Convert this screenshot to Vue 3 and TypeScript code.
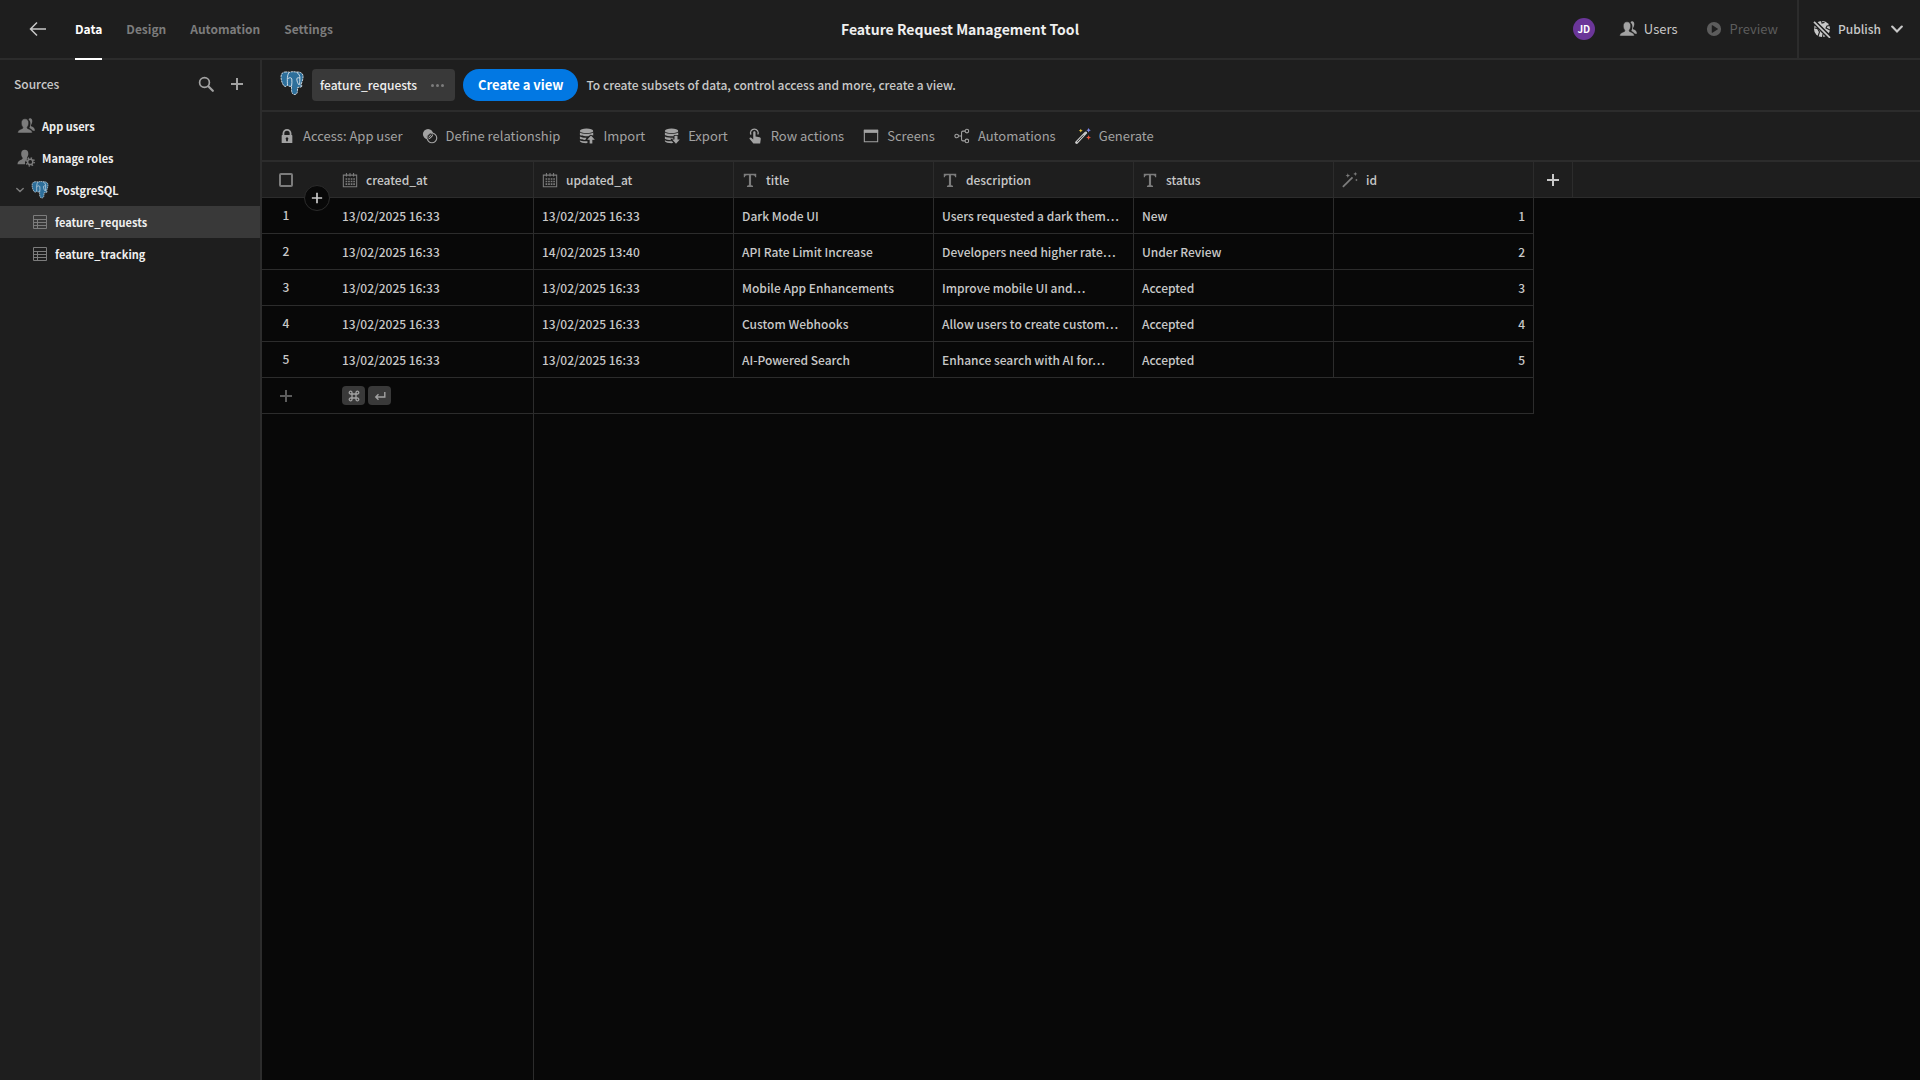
<script setup lang="ts">
import { ref } from 'vue'

interface Column {
  key: keyof Row
  icon: 'calendar' | 'text' | 'wand'
}
interface Row {
  created_at: string
  updated_at: string
  title: string
  description: string
  status: string
  id: number
}

const tabs = ['Data', 'Design', 'Automation', 'Settings']
const activeTab = ref('Data')
const activeTable = ref('feature_requests')
const tables = ['feature_requests', 'feature_tracking']

const actions = [
  { icon: 'lock', label: 'Access: App user' },
  { icon: 'relationship', label: 'Define relationship' },
  { icon: 'import', label: 'Import' },
  { icon: 'export', label: 'Export' },
  { icon: 'touch', label: 'Row actions' },
  { icon: 'screen', label: 'Screens' },
  { icon: 'flow', label: 'Automations' },
  { icon: 'magic', label: 'Generate' },
]

const columns: Column[] = [
  { key: 'created_at', icon: 'calendar' },
  { key: 'updated_at', icon: 'calendar' },
  { key: 'title', icon: 'text' },
  { key: 'description', icon: 'text' },
  { key: 'status', icon: 'text' },
  { key: 'id', icon: 'wand' },
]

const stamp = '13/02/2025 16:33'
const rows: Row[] = [
  { created_at: stamp, updated_at: stamp, title: 'Dark Mode UI', description: 'Users requested a dark them…', status: 'New', id: 1 },
  { created_at: stamp, updated_at: '14/02/2025 13:40', title: 'API Rate Limit Increase', description: 'Developers need higher rate…', status: 'Under Review', id: 2 },
  { created_at: stamp, updated_at: stamp, title: 'Mobile App Enhancements', description: 'Improve mobile UI and…', status: 'Accepted', id: 3 },
  { created_at: stamp, updated_at: stamp, title: 'Custom Webhooks', description: 'Allow users to create custom…', status: 'Accepted', id: 4 },
  { created_at: stamp, updated_at: stamp, title: 'AI-Powered Search', description: 'Enhance search with AI for…', status: 'Accepted', id: 5 },
]
</script>

<template>
  <svg class="defs" aria-hidden="true">
    <symbol id="elephant" viewBox="0 0 24 25">
      <path d="M6 1C2.500.8.8 3 1 6.500c.3 3.500 1.500 7 3.200 8.500 1.200 1 2.500.3 3.300-.8.8 1 2.500 1.300 4 1.100v4c.2 2 .8 4 2.600 4.200 2.200.2 3.200-1.200 3.300-3.200l.3-4c1.600.2 3.500-.2 4.500-1.200.3-.6-.4-.9-1.500-.8C22 11 23.600 7 22.900 4 22 1.500 19 .6 16.500 1.100 13 .5 11 .6 9.500 1.300 8.500.9 7.300.9 6 1z" fill="#2d6f9b" stroke="#dfe8ee" stroke-width=".9" stroke-dasharray="2.200 .7" />
      <path d="M9.500 1.300C7 3 7.200 9 7.500 14.200M8 7.500c1.500-1.200 3.500-1 3.800.5.200 2.500.2 5-.3 7.300M16.500 1.100c2.500 1.700 3.700 4 3.400 6.500-.3 2.300 0 3.700-.2 6.200M20 7.200c-1.500-.8-3.200-.6-3.200.8.200 2.700 1 4.500 2.400 6.100" fill="none" stroke="#dfe8ee" stroke-width=".9" />
    </symbol>
    <symbol id="back" viewBox="0 0 18 18"><path d="M17 9H2M8 2.500 1.500 9 8 15.500" fill="none" stroke="currentColor" stroke-width="1.500" /></symbol>
    <symbol id="plus" viewBox="0 0 14 14"><path d="M7 1v12M1 7h12" fill="none" stroke="currentColor" stroke-width="2" /></symbol>
    <symbol id="search" viewBox="0 0 16 16"><path d="m10.500 10.500 4.300 4.300" stroke="currentColor" stroke-width="2.200" stroke-linecap="round" /><circle cx="6.500" cy="6.500" r="4.900" fill="none" stroke="currentColor" stroke-width="1.700" /></symbol>
    <symbol id="chevron" viewBox="0 0 10 10"><path d="m1 3 4 4 4-4" fill="none" stroke="currentColor" stroke-width="1.800" stroke-linecap="round" /></symbol>
    <symbol id="users" viewBox="0 0 18 18">
      <path d="M11.500 2.200C12 1.300 13 .9 14 1.500c2 1.100 1.400 4.500.2 6.200-.5.800-.3 1.600.6 1.900 1.800.7 3 1.800 3.100 4.100l-2 .1c-.8-1.400-2.200-2.300-3.600-2.900.9-1.900 2.300-5.800-.8-8.700z" fill="currentColor" />
      <path d="M8 1.800c2.500 0 3.700 1.700 3.700 4.200 0 1.700-.6 3-1.300 3.900-.5.700-.3 1.500.6 1.800 2.500.8 4.300 1.800 4.300 4.300H.7c0-2.500 1.800-3.500 4.300-4.300.9-.3 1.100-1.100.6-1.800C4.900 9 4.300 7.700 4.300 6 4.300 3.500 5.500 1.800 8 1.800z" fill="currentColor" stroke="var(--gray-100)" stroke-width=".5" />
    </symbol>
    <symbol id="roles" viewBox="0 0 18 18">
      <path d="M7.800.8c2.300 0 3.500 1.500 3.500 3.900 0 1.600-.6 2.800-1.200 3.700-.4.600-.3 1.200.3 1.500L8 12.500v2.700H.5c0-2.700 1.800-4 4.300-4.800.9-.3 1.100-1 .6-1.800-.7-1-1.200-2.200-1.200-3.900C4.200 2.300 5.400.8 7.800.8z" fill="currentColor" />
      <circle cx="13.200" cy="12.900" r="2.600" fill="none" stroke="currentColor" stroke-width="1.500" />
      <circle cx="13.200" cy="12.900" r="4" fill="none" stroke="currentColor" stroke-width="1.500" stroke-dasharray="1.500 1.640" />
    </symbol>
    <symbol id="table" viewBox="0 0 16 16"><path d="M1.500 1.500h13v13h-13zM1.500 5.500h13M1.500 8.500h13M1.500 11.500h13M5.500 5.500v9" fill="none" stroke="currentColor" /></symbol>
    <symbol id="play" viewBox="0 0 18 18"><path fill-rule="evenodd" d="M9 1a8 8 0 1 0 0 16A8 8 0 0 0 9 1zM6.500 5.200c0-.5.400-.6.800-.4l6 3.800c.3.200.3.600 0 .8l-6 3.800c-.4.200-.8.100-.8-.4z" fill="currentColor" /></symbol>
    <symbol id="globe" viewBox="0 0 18 18">
      <circle cx="9" cy="9" r="8" fill="currentColor" />
      <path d="M8.500.5 9 3l2.500-.6M17 5.500l-3 .5-1 2 4 2M1.500 8l3 .5 2 3.500-1.500 4.500M9.500 17l.5-3" fill="none" stroke="var(--gray-100)" stroke-width="1.100" />
      <path d="m0 .8 17.500 17.500" stroke="var(--gray-100)" stroke-width="4.600" />
      <path d="m1 1.800 16 16" stroke="currentColor" stroke-width="1.700" />
    </symbol>
    <symbol id="lock" viewBox="0 0 18 18"><path fill-rule="evenodd" d="M14.500 8H14V6A5 5 0 0 0 4 6v2h-.5a.5.500 0 0 0-.5.500v8c0 .3.200.5.500.5h11c.3 0 .5-.2.500-.5v-8a.5.500 0 0 0-.5-.5zM6 6a3 3 0 0 1 6 0v2H6zm4 7.200V15H8v-1.800a1.500 1.500 0 1 1 2 0z" fill="currentColor" /></symbol>
    <symbol id="relationship" viewBox="0 0 18 18">
      <circle cx="6.800" cy="6.800" r="5.800" fill="currentColor" />
      <circle cx="11.200" cy="11.200" r="5.400" fill="none" stroke="currentColor" stroke-width="1.300" />
      <path d="M12 6.800A5.500 5.500 0 0 0 6.500 12M6 9.500 9.500 6M7 12l4.500-4.500M9 13l3.500-3.500" stroke="var(--gray-100)" stroke-width="1.100" fill="none" />
    </symbol>
    <symbol id="import" viewBox="0 0 18 18">
      <ellipse cx="8.500" cy="3.300" rx="7.500" ry="2.600" fill="currentColor" />
      <path d="M1 5.200c2 2 13 2 15 0v3.300l-3-.9-2.500 1.600C6.500 9.500 2.500 9.200 1 8zM1 9.500c1.800 1.200 4.500 1.500 7.500 1.400L7 13.500c-2.500 0-5-.3-6-1.300zM1 13.700c1 .9 3 1.200 6 1.300h2.500v2C6 17.200 1.500 16.700 1 15z" fill="currentColor" />
      <path d="m13.500 8.500 4.300 4.700h-2.800v4.300h-3v-4.300H9.200z" fill="currentColor" />
    </symbol>
    <symbol id="export" viewBox="0 0 18 18">
      <ellipse cx="8.500" cy="3.300" rx="7.500" ry="2.600" fill="currentColor" />
      <path d="M1 5.200c2 2 13 2 15 0v2.600h-5v1.600C6.500 9.500 2.500 9.200 1 8zM1 9.500c1.800 1.200 6 1.400 9.500 1.400v1.200H7l1.300 1.600C5 13.700 2 13.300 1 12.200zM1 13.700c2 1.300 5 1.200 8 1.300l1.500 2C6 17.200 1.500 16.700 1 15z" fill="currentColor" />
      <path d="m13.500 17.800 4.300-4.800h-2.600V8.800h-3.400V13H9.200z" fill="currentColor" />
    </symbol>
    <symbol id="touch" viewBox="0 0 18 18">
      <path d="M4.500 7.500a4.300 4.300 0 1 1 7.600-.1" fill="none" stroke="currentColor" stroke-width="1.400" />
      <path d="M7 5.200c0-1.900 2.600-1.900 2.600 0v4.300l4.500.8c1.100.3 1.500 1 1.400 2l-.7 5.200H7.200L3 12.300c-.8-1.200.7-2.300 1.800-1.300L7 12.800z" fill="currentColor" />
    </symbol>
    <symbol id="screen" viewBox="0 0 18 18"><path d="M1.500 2.500h15v13h-15z" fill="none" stroke="currentColor" stroke-width="1.200" /><path d="M1 2h16v3.500H1z" fill="currentColor" /></symbol>
    <symbol id="flow" viewBox="0 0 18 18">
      <g fill="none" stroke="currentColor" stroke-width="1.200"><circle cx="3" cy="9" r="2" /><circle cx="14.500" cy="3.500" r="2" /><circle cx="14.500" cy="14.500" r="2" /><path d="M5 9h3.500M12.500 3.500H10A1.500 1.500 0 0 0 8.500 5v8a1.500 1.500 0 0 0 1.500 1.500h2.500" /></g>
    </symbol>
    <symbol id="magic" viewBox="0 0 18 18">
      <path d="M1.800 16.200 12 5.500" stroke="#c8c8c8" stroke-width="3.200" stroke-linecap="round" /><path d="m2.500 15.500 7-7.300" stroke="#1e1e1e" stroke-width="1" />
      <path d="m6.500.8.700 1.500 1.500.7-1.500.7-.7 1.500-.7-1.500L4.300 3l1.500-.7z" fill="#e8c33c" />
      <path d="m15.300 0 .8 1.700 1.700.8-1.700.8-.8 1.700-.8-1.700-1.700-.8 1.700-.8z" fill="#7d86e8" />
      <path d="m15.300 8 .8 1.900 1.900.8-1.900.8-.8 1.900-.8-1.900-1.900-.8 1.900-.8z" fill="#e8543c" />
    </symbol>
    <symbol id="calendar" viewBox="0 0 18 18">
      <path d="M1.500 3.500h15v13h-15zM5 1v4M9 1v4M13 1v4" fill="none" stroke="currentColor" stroke-width="1.200" />
      <path d="M4 7.800h10.500M4 10.700h10.500M4 13.600h10.500" stroke="currentColor" stroke-width="1.800" stroke-dasharray="1.900 1" />
    </symbol>
    <symbol id="text" viewBox="0 0 18 18"><path d="M2 2h14v4h-1.200c-.2-1.600-.9-2.400-2.400-2.400H10.200v10.600c0 .8.500 1.100 2.200 1.200V17H5.600v-1.600c1.700-.1 2.200-.4 2.200-1.200V3.600H5.600C4.100 3.600 3.400 4.400 3.200 6H2z" fill="currentColor" /></symbol>
    <symbol id="wand" viewBox="0 0 18 18">
      <path d="M1 16.800 11.800 6" stroke="currentColor" stroke-width="2" />
      <path d="m6.500 1.500.8 1.800 1.800.7-1.800.8-.8 1.700-.7-1.700L4 4l1.800-.7zM15 0l.7 1.500 1.600.7-1.600.7L15 4.500l-.7-1.600-1.600-.7 1.600-.7zM16.200 7.500l.5 1 1 .5-1 .5-.5 1-.5-1-1-.5 1-.5z" fill="currentColor" />
    </symbol>
    <symbol id="command" viewBox="0 0 12 12"><path d="M4 4h4v4H4zM4 4H2.700A1.400 1.400 0 1 1 4 2.700zM8 4V2.700A1.400 1.400 0 1 1 9.300 4zM8 8h1.300A1.400 1.400 0 1 1 8 9.300zM4 8v1.300A1.400 1.400 0 1 1 2.700 8z" fill="none" stroke="currentColor" stroke-width="1.300" /></symbol>
    <symbol id="return" viewBox="0 0 12 12"><path d="M10.800 2v5H2M4.500 4.300 1.800 7l2.700 2.700" fill="none" stroke="currentColor" stroke-width="1.400" /></symbol>
  </svg>

  <div class="app">
    <header class="topbar">
      <div class="topbar-side">
        <button class="icon-button back" aria-label="Back"><svg class="i18"><use href="#back" /></svg></button>
        <nav class="tabs">
          <a v-for="tab in tabs" :key="tab" href="#" :class="['tab', { active: tab === activeTab }]" @click.prevent="activeTab = tab">{{ tab }}</a>
        </nav>
      </div>
      <h1>Feature Request Management Tool</h1>
      <div class="topbar-side end">
        <span class="avatar">JD</span>
        <button class="top-action"><svg class="i18"><use href="#users" /></svg>Users</button>
        <button class="top-action preview" disabled><svg class="i16"><use href="#play" /></svg>Preview</button>
        <button class="top-action publish"><svg class="i18"><use href="#globe" /></svg>Publish<svg class="i12"><use href="#chevron" /></svg></button>
      </div>
    </header>

    <div class="body">
      <aside class="sidebar">
        <div class="sidebar-head">
          <h2>Sources</h2>
          <button class="icon-button" aria-label="Search"><svg class="i16"><use href="#search" /></svg></button>
          <button class="icon-button" aria-label="Add source"><svg class="i14"><use href="#plus" /></svg></button>
        </div>
        <nav class="sources">
          <a href="#" class="source"><svg class="i18"><use href="#users" /></svg>App users</a>
          <a href="#" class="source"><svg class="i18"><use href="#roles" /></svg>Manage roles</a>
          <a href="#" class="source datasource"><svg class="i8"><use href="#chevron" /></svg><svg class="i18"><use href="#elephant" /></svg>PostgreSQL</a>
          <a v-for="name in tables" :key="name" href="#" :class="['source', 'child', { selected: name === activeTable }]" @click.prevent="activeTable = name">
            <svg class="i16"><use href="#table" /></svg>{{ name }}
          </a>
        </nav>
      </aside>

      <main class="content">
        <div class="views">
          <svg class="logo"><use href="#elephant" /></svg>
          <button class="view-pill">feature_requests<span class="dots"><i /><i /><i /></span></button>
          <button class="cta">Create a view</button>
          <p>To create subsets of data, control access and more, create a view.</p>
        </div>

        <div class="toolbar">
          <button v-for="action in actions" :key="action.label" class="tool">
            <svg class="i16"><use :href="'#' + action.icon" /></svg>{{ action.label }}
          </button>
        </div>

        <div class="grid">
          <table>
            <colgroup>
              <col class="gutter-col" />
              <col v-for="column in columns" :key="column.key" class="data-col" />
              <col class="add-col" />
              <col />
            </colgroup>
            <thead>
              <tr>
                <th class="gutter">
                  <span class="gutter-box"><input type="checkbox" aria-label="Select all rows" /></span>
                  <button class="insert" aria-label="Insert row"><svg class="i12"><use href="#plus" /></svg></button>
                </th>
                <th v-for="column in columns" :key="column.key" class="lined">
                  <span class="head-label"><svg class="i16"><use :href="'#' + column.icon" /></svg>{{ column.key }}</span>
                </th>
                <th class="lined add"><button class="icon-button" aria-label="Add column"><svg class="i14"><use href="#plus" /></svg></button></th>
                <th />
              </tr>
            </thead>
            <tbody>
              <tr v-for="row in rows" :key="row.id">
                <td class="gutter"><span class="gutter-box number">{{ row.id }}</span></td>
                <td v-for="column in columns" :key="column.key" :class="['lined', { numeric: column.key === 'id' }]">{{ row[column.key] }}</td>
                <td class="blank" colspan="2" />
              </tr>
              <tr>
                <td class="gutter"><span class="gutter-box"><button class="icon-button new-row" aria-label="Add row"><svg class="i14"><use href="#plus" /></svg></button></span></td>
                <td class="lined">
                  <span class="keys"><kbd aria-label="Command"><svg class="i12"><use href="#command" /></svg></kbd><kbd aria-label="Return"><svg class="i12"><use href="#return" /></svg></kbd></span>
                </td>
                <td class="lined" colspan="5" />
                <td class="blank" colspan="2" />
              </tr>
            </tbody>
          </table>
          <div class="pinned-edge" />
        </div>
      </main>
    </div>
  </div>
</template>

<style>
body {
  background: #080808;
}
</style>

<style scoped>
.defs {
  position: absolute;
  width: 0;
  height: 0;
}
.app {
  --gray-50: #080808;
  --gray-100: #1e1e1e;
  --gray-200: #2c2c2c;
  --gray-300: #393939;
  --gray-500: #5c5c5c;
  --gray-600: #7c7c7c;
  --gray-700: #a2a2a2;
  --gray-800: #c8c8c8;
  --gray-900: #efefef;
  display: flex;
  flex-direction: column;
  min-height: 100vh;
  background: var(--gray-50);
  color: var(--gray-800);
  font: 500 12px/20px 'Noto Sans CJK SC', 'Open Sans', sans-serif;
}
* {
  box-sizing: border-box;
}
button {
  padding: 0;
  border: 0;
  background: none;
  color: inherit;
  font: inherit;
}
a {
  color: inherit;
  text-decoration: none;
}
h1,
h2,
p {
  margin: 0;
}
svg {
  flex: none;
  display: block;
}
.i8 { width: 8px; height: 8px; }
.i12 { width: 12px; height: 12px; }
.i14 { width: 14px; height: 14px; }
.i16 { width: 16px; height: 16px; }
.i18 { width: 18px; height: 18px; }
.icon-button {
  display: flex;
  align-items: center;
  justify-content: center;
}

.topbar {
  display: flex;
  height: 60px;
  background: var(--gray-100);
  border-bottom: 2px solid var(--gray-200);
}
.topbar-side {
  flex: 1;
  display: flex;
  align-items: center;
}
.topbar-side.end {
  justify-content: flex-end;
}
.back {
  margin: 0 28px 0 29px;
}
.tabs {
  display: flex;
  align-self: stretch;
  gap: 24px;
  margin-bottom: -2px;
}
.tab {
  display: flex;
  align-items: center;
  color: var(--gray-600);
  font-weight: 700;
  border-bottom: 2px solid transparent;
}
.tab.active {
  color: #fff;
  border-color: #fff;
}
h1 {
  align-self: center;
  color: var(--gray-900);
  font-size: 14px;
  font-weight: 700;
}
.avatar {
  width: 22px;
  height: 22px;
  margin-right: 24px;
  border-radius: 50%;
  background: #6b3699;
  color: #fff;
  font-size: 10px;
  font-weight: 700;
  line-height: 22px;
  text-align: center;
}
.top-action {
  display: flex;
  align-items: center;
  gap: 7px;
  font-size: 13px;
  font-weight: 400;
}
.top-action:not(.publish) svg {
  color: var(--gray-700);
}
.top-action.preview {
  margin: 0 19px 0 28px;
  gap: 8px;
  color: var(--gray-500);
}
.top-action.preview svg {
  color: inherit;
}
.publish {
  align-self: stretch;
  padding: 0 17px 0 14px;
  border-left: 2px solid var(--gray-200);
  font-size: 12px;
  font-weight: 500;
}
.publish svg:last-child {
  margin-left: 3px;
}

.body {
  flex: 1;
  display: flex;
}
.sidebar {
  flex: none;
  width: 262px;
  background: var(--gray-100);
  border-right: 2px solid var(--gray-200);
}
.sidebar-head {
  display: flex;
  align-items: center;
  gap: 16px;
  height: 50px;
  padding: 0 16px 2px 14px;
}
h2 {
  flex: 1;
  font-size: 12px;
  font-weight: 500;
}
.sidebar-head .icon-button {
  color: var(--gray-700);
}
.source {
  display: flex;
  align-items: center;
  gap: 7px;
  height: 32px;
  padding-left: 17px;
  color: var(--gray-900);
  font-size: 11px;
  font-weight: 700;
}
.source svg {
  color: var(--gray-600);
}
.datasource {
  padding-left: 16px;
}
.child {
  padding-left: 32px;
}
.selected {
  background: var(--gray-300);
}

.content {
  flex: 1;
  min-width: 0;
  display: flex;
  flex-direction: column;
}
.views {
  display: flex;
  align-items: center;
  gap: 8px;
  height: 52px;
  padding-left: 18px;
  background: var(--gray-100);
  border-bottom: 2px solid var(--gray-200);
}
.logo {
  width: 24px;
  height: 25px;
  margin-bottom: 3px;
}
.view-pill {
  display: flex;
  align-items: center;
  gap: 14px;
  height: 32px;
  padding: 0 11px 0 8px;
  border-radius: 4px;
  background: var(--gray-300);
  color: var(--gray-900);
}
.dots {
  display: flex;
  gap: 2px;
}
.dots i {
  width: 3px;
  height: 3px;
  border-radius: 50%;
  background: var(--gray-600);
}
.cta {
  height: 32px;
  padding: 0 15px;
  border-radius: 16px;
  background: #0278e3;
  color: #fff;
  font-size: 13px;
  font-weight: 700;
}
.toolbar {
  display: flex;
  align-items: center;
  gap: 19px;
  height: 50px;
  padding-left: 17px;
  background: var(--gray-100);
  border-bottom: 2px solid var(--gray-200);
}
.tool {
  display: flex;
  align-items: center;
  gap: 8px;
  color: var(--gray-700);
  font-size: 13px;
  font-weight: 400;
}

.grid {
  flex: 1;
  display: flex;
  flex-direction: column;
}
table {
  width: 100%;
  table-layout: fixed;
  border-collapse: separate;
  border-spacing: 0;
}
.gutter-col { width: 72px; }
.data-col { width: 200px; }
.add-col { width: 39px; }
th,
td {
  height: 36px;
  padding: 0 8px;
  border-bottom: 1px solid var(--gray-200);
  text-align: left;
  font-weight: 500;
  white-space: nowrap;
}
th {
  background: var(--gray-100);
}
.lined {
  border-right: 1px solid var(--gray-200);
}
.blank {
  border: 0;
}
.gutter {
  position: relative;
  padding: 0;
}
.gutter-box {
  display: flex;
  justify-content: center;
  width: 48px;
}
.number {
  padding-bottom: 2px;
}
.numeric {
  text-align: right;
}
input {
  appearance: none;
  width: 14px;
  height: 14px;
  margin: 0;
  border: 2px solid var(--gray-600);
  border-radius: 2px;
}
.insert {
  position: absolute;
  right: 4px;
  bottom: -14px;
  display: flex;
  align-items: center;
  justify-content: center;
  width: 26px;
  height: 26px;
  border: 1px solid var(--gray-200);
  border-radius: 50%;
  background: var(--gray-50);
}
.head-label {
  display: flex;
  align-items: center;
  gap: 8px;
}
.head-label svg {
  color: var(--gray-600);
}
.add {
  padding: 0;
}
.add .icon-button {
  width: 100%;
}
.new-row {
  color: var(--gray-500);
}
.keys {
  display: flex;
  gap: 3px;
}
kbd {
  display: flex;
  align-items: center;
  justify-content: center;
  width: 23px;
  height: 19px;
  border-radius: 4px;
  background: var(--gray-300);
  color: var(--gray-700);
}
.pinned-edge {
  flex: 1;
  width: 272px;
  border-right: 1px solid var(--gray-200);
}
</style>
